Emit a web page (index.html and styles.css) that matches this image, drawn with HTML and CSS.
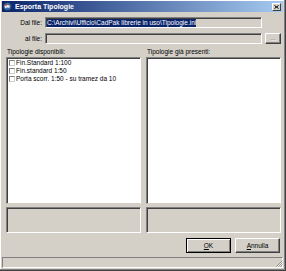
FILE: index.html
```html
<!DOCTYPE html>
<html>
<head>
    <meta name="viewport" content="width=device-width, initial-scale=1">
    <link rel="stylesheet" href="styles.css">
</head>
<body>

<div class="window">
    <div class="titlebar">
        <svg class="app-icon" width="9" height="9" viewBox="0 0 9 9">
            <circle cx="4.5" cy="4.5" r="4" fill="#3a6ea5" stroke="#1a2a5a" stroke-width="0.6"/>
            <path d="M1.5 3.5 Q4 2 7 4 L6 6 Q4 5 2 6.5 Z" fill="#e8e8e8"/>
            <circle cx="3" cy="3" r="1" fill="#d04030"/>
        </svg>
        <span class="title">Esporta Tipologie</span>
        <span class="close-btn">
            <svg width="5" height="4" viewBox="0 0 5 4">
                <path d="M0.5 0.5 L4.5 3.5 M4.5 0.5 L0.5 3.5" stroke="#000" stroke-width="1"/>
            </svg>
        </span>
    </div>

    <div class="content">
        <div class="file-row">
            <label class="file-label">Dal file:</label>
            <div class="field"><span class="selected">C:\Archivi\Ufficio\CadPak librerie in uso\Tipologie.ini</span></div>
            <div class="spacer"></div>
        </div>
        <div class="file-row second">
            <label class="file-label">al file:</label>
            <div class="field"></div>
            <div class="browse-btn">...</div>
        </div>

        <div class="columns">
            <div class="column">
                <div class="caption">Tipologie disponibili:</div>
                <div class="listbox">
                    <div class="item"><span class="check"></span>Fin.Standard 1:100</div>
                    <div class="item"><span class="check"></span>Fin.standard 1:50</div>
                    <div class="item"><span class="check"></span>Porta scorr. 1:50 - su tramez da 10</div>
                </div>
                <div class="info-panel"></div>
            </div>
            <div class="column">
                <div class="caption">Tipologie già presenti:</div>
                <div class="listbox"></div>
                <div class="info-panel"></div>
            </div>
        </div>

        <div class="buttons">
            <div class="btn default"><span class="btn-face"><u>O</u>K</span></div>
            <div class="btn"><span class="btn-face"><u>A</u>nnulla</span></div>
        </div>
    </div>

    <div class="statusbar">
        <div class="status-panel"></div>
        <svg class="grip" width="7" height="7" viewBox="0 0 7 7">
            <path d="M6.5 0.5 L0.5 6.5 M6.5 2.5 L2.5 6.5 M6.5 4.5 L4.5 6.5" stroke="#808080" stroke-width="0.8"/>
            <path d="M6.5 1.5 L1.5 6.5 M6.5 3.5 L3.5 6.5" stroke="#ffffff" stroke-width="0.6"/>
        </svg>
    </div>
</div>

</body>
</html>
```

FILE: styles.css
```css
body {
    margin: 0;
    padding: 0;
    width: 286px;
    height: 271px;
    background-color: #d4d0c8;
    font-family: 'Liberation Sans', Arial, sans-serif;
    font-size: 6.5px;
    color: #000;
    overflow: hidden;
}
.window {
    box-sizing: border-box;
    width: 286px;
    height: 271px;
    padding: 1px 2px 0 2px;
    border-right: 1px solid #404040;
    border-bottom: 1px solid #404040;
    box-shadow: inset -1px -1px 0 #808080, inset 1px 1px 0 #ffffff;
    display: flex;
    flex-direction: column;
}
.titlebar {
    height: 11px;
    background: linear-gradient(to right, #0a246a, #a6caf0);
    display: flex;
    align-items: center;
    padding: 0 2px 0 1px;
}
.app-icon {
    flex: none;
    margin-right: 3px;
}
.title {
    flex: 1;
    color: #fff;
    font-weight: bold;
    font-size: 7px;
    line-height: 11px;
}
.close-btn {
    width: 9px;
    height: 8px;
    box-sizing: border-box;
    background-color: #d4d0c8;
    border-top: 1px solid #fff;
    border-left: 1px solid #fff;
    border-right: 1px solid #404040;
    border-bottom: 1px solid #404040;
    display: flex;
    align-items: center;
    justify-content: center;
}
.content {
    padding: 0 2px 0 4px;
}
.file-row {
    display: flex;
    height: 11px;
    margin-top: 5px;
    gap: 3px;
}
.file-label {
    width: 36px;
    text-align: right;
    line-height: 11px;
}
.field {
    width: 217px;
    box-sizing: border-box;
    border-top: 1px solid #808080;
    border-left: 1px solid #808080;
    border-right: 1px solid #fff;
    border-bottom: 1px solid #fff;
    box-shadow: inset 1px 1px 0 #404040;
    background-color: #d4d0c8;
    padding: 1px 0 0 1px;
    line-height: 8px;
    white-space: nowrap;
    overflow: hidden;
}
.selected {
    background-color: #0a246a;
    color: #fff;
    display: inline-block;
    height: 8px;
}
.spacer {
    width: 16px;
}
.browse-btn {
    width: 16px;
    box-sizing: border-box;
    border-top: 1px solid #fff;
    border-left: 1px solid #fff;
    border-right: 1px solid #404040;
    border-bottom: 1px solid #404040;
    box-shadow: inset -1px -1px 0 #808080;
    text-align: center;
    line-height: 8px;
    color: #808080;
    text-shadow: 1px 1px 0 #fff;
}
.columns {
    display: flex;
    gap: 5px;
}
.column {
    width: 135px;
    display: flex;
    flex-direction: column;
}
.caption {
    margin-top: 4px;
    height: 8px;
    line-height: 8px;
    padding-left: 1px;
}
.listbox {
    margin-top: 1px;
    height: 147px;
    box-sizing: border-box;
    background-color: #fff;
    border-top: 1px solid #808080;
    border-left: 1px solid #808080;
    border-right: 1px solid #fff;
    border-bottom: 1px solid #d4d0c8;
    box-shadow: inset 1px 1px 0 #404040;
    padding: 1px 0 0 2px;
}
.item {
    height: 8px;
    line-height: 8px;
    display: flex;
    align-items: center;
    white-space: nowrap;
}
.check {
    width: 6px;
    height: 6px;
    box-sizing: border-box;
    border-top: 1px solid #808080;
    border-left: 1px solid #808080;
    border-right: 1px solid #d4d0c8;
    border-bottom: 1px solid #d4d0c8;
    background-color: #fff;
    margin-right: 1px;
}
.info-panel {
    margin-top: 3px;
    height: 26px;
    box-sizing: border-box;
    border-top: 1px solid #808080;
    border-left: 1px solid #808080;
    border-right: 1px solid #fff;
    border-bottom: 1px solid #fff;
    box-shadow: inset 1px 1px 0 #404040;
}
.buttons {
    margin-top: 5px;
    height: 15px;
    display: flex;
    justify-content: flex-end;
    gap: 4px;
    padding-right: 1px;
}
.btn {
    width: 45px;
    box-sizing: border-box;
    border-top: 1px solid #fff;
    border-left: 1px solid #fff;
    border-right: 1px solid #404040;
    border-bottom: 1px solid #404040;
    box-shadow: inset -1px -1px 0 #808080;
    display: flex;
    align-items: center;
    justify-content: center;
}
.btn.default {
    border: 1px solid #000;
    box-shadow: inset 1px 1px 0 #fff, inset -1px -1px 0 #808080;
}
.btn-face {
    line-height: 8px;
}
.statusbar {
    margin-top: 4px;
    height: 11px;
    display: flex;
    position: relative;
}
.status-panel {
    flex: 1;
    box-sizing: border-box;
    border-top: 1px solid #808080;
    border-left: 1px solid #808080;
    border-right: 1px solid #fff;
    border-bottom: 1px solid #fff;
}
.grip {
    position: absolute;
    right: 0;
    bottom: 1px;
}
```
